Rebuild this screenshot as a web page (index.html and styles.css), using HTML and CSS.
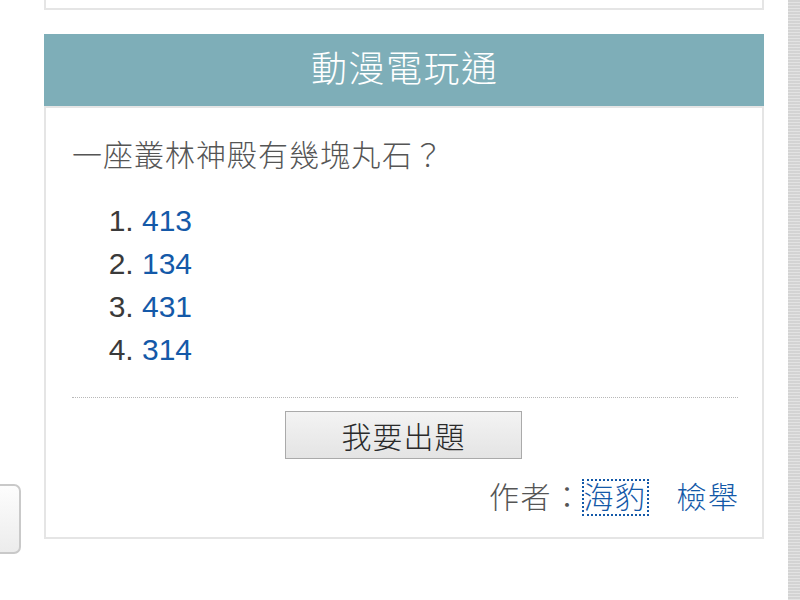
FILE: index.html
```html
<!DOCTYPE html>
<html lang="zh-Hant">
<head>
<meta charset="utf-8">
<title>動漫電玩通</title>
<link rel="stylesheet" href="styles.css">
</head>
<body>
<div class="page">
  <main class="main">
    <div class="prev-box"></div>
    <section class="quiz">
      <h2 class="quiz-title">動漫電玩通</h2>
      <div class="quiz-body">
        <p class="question">一座叢林神殿有幾塊丸石？</p>
        <ol class="answers">
          <li><a href="#">413</a></li>
          <li><a href="#">134</a></li>
          <li><a href="#">431</a></li>
          <li><a href="#">314</a></li>
        </ol>
        <hr class="sep">
        <div class="actions"><button class="ask" type="button">我要出題</button></div>
        <div class="author">作者：<a href="#" class="author-link">海豹</a><a href="#" class="report">檢舉</a></div>
      </div>
    </section>
  </main>
  <div class="scrollbar"></div>
</div>
<div class="side-tab"></div>
</body>
</html>
```

FILE: styles.css
```css
html, body {
  margin: 0;
  padding: 0;
  background: #fff;
  overflow: hidden;
}
body {
  font-family: "Liberation Sans", "Noto Sans CJK TC", sans-serif;
  font-size: 30px;
  color: #555;
}
.page {
  display: flex;
  width: 800px;
  height: 600px;
}
.main {
  width: 720px;
  padding-left: 44px;
  margin-right: 24px;
}
.scrollbar {
  width: 12px;
  height: 600px;
  background-color: #dadada;
  background-image: repeating-linear-gradient(0deg, rgba(255,255,255,0.25) 0 1px, rgba(0,0,0,0.03) 1px 3px);
}
.prev-box {
  height: 8px;
  border: 2px solid #e5e5e5;
  border-top: 0;
  margin-bottom: 24px;
}
.quiz-title {
  margin: 0;
  height: 72px;
  line-height: 72px;
  background: #7eaeb8;
  color: #fff;
  font-size: 36px;
  font-weight: 300;
  letter-spacing: 1.5px;
  text-indent: 1.5px;
  text-align: center;
}
.quiz-body {
  border: 2px solid #e5e5e5;
  padding: 0 24px 17px 26px;
}
.question {
  margin: 26px 0 0;
  line-height: 44px;
  font-weight: 300;
  letter-spacing: 1px;
  color: #555;
}
.answers {
  margin: 21px 0 0;
  padding-left: 70px;
  color: #3a3a3a;
  line-height: 43px;
  font-size: 30px;
}
.answers a {
  color: #1459a8;
  text-decoration: none;
}
.sep {
  margin: 26px 0 0;
  border: 0;
  border-top: 1px dotted #b8b8b8;
  height: 0;
}
.actions {
  margin-top: 13px;
  display: flex;
  justify-content: center;
  padding-right: 3px;
}
.ask {
  width: 237px;
  height: 48px;
  border: 1px solid #aaa;
  border-radius: 0;
  background: linear-gradient(#f3f3f3, #e4e4e4);
  font-family: "Noto Sans CJK TC", sans-serif;
  font-size: 30px;
  font-weight: 300;
  letter-spacing: 1px;
  color: #2a2a2a;
  padding: 0;
  line-height: 44px;
}
.author {
  margin-top: 17px;
  line-height: 44px;
  text-align: right;
  color: #555;
  font-weight: 300;
  letter-spacing: 1.5px;
}
.author a {
  color: #1459a8;
  text-decoration: none;
}
.author-link {
  outline: 2px dotted #1459a8;
  outline-offset: 0;
}
.report {
  margin-left: 30px;
  margin-right: -1.5px;
}
.side-tab {
  position: absolute;
  left: -20px;
  top: 484px;
  width: 37px;
  height: 66px;
  border: 2px solid #c9c9c9;
  border-radius: 7px;
  background: linear-gradient(#fdfdfd, #ececec);
}
```
